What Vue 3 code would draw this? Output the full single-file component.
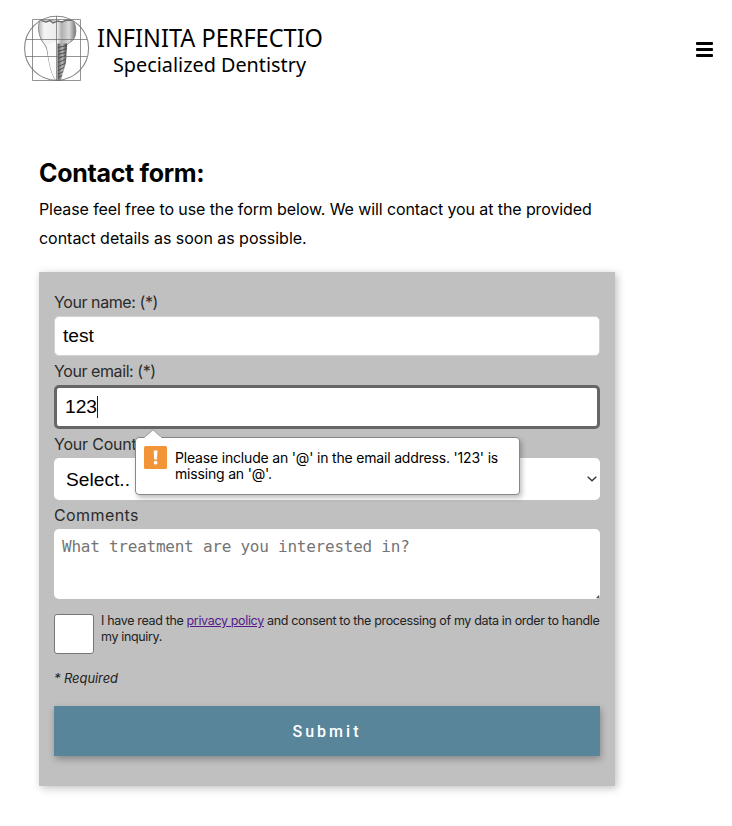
<script setup>
import { ref } from 'vue'

const name = ref('test')
const email = ref('123')
const country = ref('')
const comments = ref('')
const consent = ref(false)
</script>

<template>
  <div class="page">
    <header class="header">
      <svg class="logo" width="304" height="72" viewBox="0 0 304 72" role="img">
        <defs>
          <linearGradient id="crown" x1="0" x2="1" y1="0" y2="0">
            <stop offset="0" stop-color="#b5b5b5" />
            <stop offset=".15" stop-color="#f4f4f4" />
            <stop offset=".5" stop-color="#ececec" />
            <stop offset=".62" stop-color="#b0b0b0" />
            <stop offset=".82" stop-color="#dadada" />
            <stop offset="1" stop-color="#777" />
          </linearGradient>
          <linearGradient id="screw" x1="0" x2="1" y1="0" y2="0">
            <stop offset="0" stop-color="#555" />
            <stop offset=".5" stop-color="#bbb" />
            <stop offset="1" stop-color="#444" />
          </linearGradient>
        </defs>
        <g transform="translate(0 1.500)">
          <path d="M16 6.500C22 9 27 6 33 8C39 9 44 6 49 7C52 11 53 20 50 25C48 29 43 29 42 34L40 48L36 67H32C27 61 25 48 23 36C22 31 17 28 16 23C14 17 14 11 16 6.500Z" fill="url(#crown)" stroke="#777" stroke-width=".8" />
          <path d="M23 31C24 43 26 59 32 67H33.500V27C29 29 26 29 23 31Z" fill="#fafafa" />
          <path d="M33.500 30H43L42 49L37 67H33.500Z" fill="url(#screw)" />
          <path d="M34 34L43 32M34 38L43 35M34 41L42 39M34 45L42 42M34 49L41 46M34 53L41 50M34 57L40 54M34 61L39 58M34 64L38 62" stroke="#444" stroke-width=".9" />
          <path d="M17 7L22 8.500L26 7L29 9.500L34 7.500L38 8.500L42 6.500L48 7" fill="none" stroke="#666" stroke-width="1.200" />
        </g>
        <circle cx="32.600" cy="36.300" r="32" fill="none" stroke="#888" stroke-width="1.100" />
        <path d="M8.500 7.500H56.500V68.500H8.500ZM2 27.500H63M2 44.500H63M32.500 4V68" fill="none" stroke="#666" stroke-width="1" stroke-opacity=".7" />
        <text class="brand" x="73" y="34.500" textLength="226" lengthAdjust="spacingAndGlyphs">INFINITA PERFECTIO</text>
        <text class="tagline" x="89" y="60" textLength="193" lengthAdjust="spacingAndGlyphs">Specialized Dentistry</text>
      </svg>
      <button class="menu" type="button"><i></i><i></i><i></i></button>
    </header>

    <main class="main">
      <h2 class="title">Contact form:</h2>
      <p class="intro"><span class="intro-a">Please feel free to use the form below. We will contact you at the provided</span><br /><span class="intro-b">contact details as soon as possible.</span></p>

      <form class="form" novalidate @submit.prevent>
        <label class="label" for="name">Your name: (*)</label>
        <input id="name" v-model="name" class="field" type="text" />
        <label class="label" for="email">Your email: (*)</label>
        <div class="email">
          <input id="email" v-model="email" class="field focused" type="text" />
          <span class="caret"></span>
          <div class="tip">
            <svg class="tip-arrow" width="18" height="9" viewBox="0 0 18 9"><path d="M0 9L9 .700L18 9" fill="#fff" stroke="#999" /><path d="M1 8.500H17" stroke="#fff" stroke-width="1.500" /></svg>
            <svg class="tip-icon" width="23" height="23" viewBox="0 0 23 23"><rect width="23" height="23" rx="1.500" fill="#f29438" /><path d="M9.700 4.500H13.500L13 13.500H10.200Z" fill="#fff" /><circle cx="11.600" cy="16.700" r="1.900" fill="#fff" /></svg>
            <p class="tip-text">Please include an '@' in the email address. '123' is<br />missing an '@'.</p>
          </div>
        </div>
        <label class="label country" for="country">Your Country</label>
        <div class="select-wrap">
          <select id="country" v-model="country" class="select"><option value="">Select..</option></select>
          <svg class="chevron" width="10" height="6" viewBox="0 0 10 6"><path d="M.700 .700L5 4.800L9.300 .700" fill="none" stroke="#333" stroke-width="1.300" /></svg>
        </div>
        <label class="label comments" for="comments">Comments</label>
        <div class="area-wrap">
          <textarea id="comments" v-model="comments" class="area" placeholder="What treatment are you interested in?"></textarea>
          <svg class="grip" width="3" height="3" viewBox="0 0 3 3"><path d="M0 3L3 0V3Z" fill="#555" /></svg>
        </div>
        <div class="consent">
          <input v-model="consent" class="check" type="checkbox" />
          <p class="terms"><span>I have read the <a href="#">privacy policy</a> and consent to the processing of my data in order to handle</span><br />my inquiry.</p>
        </div>
        <p class="required">* Required</p>
        <button class="submit" type="submit">Submit</button>
      </form>
    </main>
  </div>
</template>

<style>
body { margin: 0; background: #fff; }
</style>

<style scoped>
* { box-sizing: border-box; }
.page { width: 732px; height: 826px; overflow: hidden; color: #000; font-family: Inter, sans-serif; font-size: 16px; }
.header { display: flex; justify-content: space-between; align-items: flex-start; padding: 12px 19px 0 24px; height: 158px; }
.logo { display: block; overflow: visible; }
.brand { font: 26px "Noto Sans", sans-serif; }
.tagline { font: 20px "Noto Sans", sans-serif; }
.menu { display: flex; flex-direction: column; gap: 3px; width: 17px; padding: 0; margin-top: 30px; border: 0; background: none; }
.menu i { width: 17px; height: 3px; border-radius: 1px; background: #000; }
.main { width: 576px; margin-left: 39px; }
.title { margin: 0; height: 37px; font-size: 25px; line-height: 30px; font-weight: 700; letter-spacing: -0.3px; white-space: nowrap; }
.intro { margin: 0; height: 77px; line-height: 29px; white-space: nowrap; }
.intro-a { letter-spacing: -0.1px; }
.intro-b { letter-spacing: -0.03px; }
.form { display: flex; flex-direction: column; height: 514px; padding: 15px; background: #c0c0c0; box-shadow: 2px 2px 8px rgba(0, 0, 0, .25); }
.label { height: 29px; line-height: 30px; color: #2b2b2b; letter-spacing: -0.42px; }
.label.country { letter-spacing: -0.2px; }
.label.comments { letter-spacing: 0.4px; }
.field { display: block; width: 100%; height: 40px; padding: 0 8px; border: 1px solid #d2d2d2; border-radius: 5px; background: #fff; color: #000; font: 19.200px "Liberation Sans", Arial, sans-serif; outline: none; }
.email { position: relative; }
.field.focused { height: 44px; border: 3px solid #666; }
.caret { position: absolute; left: 43px; top: 11px; width: 1px; height: 22px; background: #222; }
.tip { position: absolute; z-index: 2; left: 81px; top: 52px; display: flex; gap: 8px; width: 385px; height: 58px; padding: 8px; border: 1px solid #888; border-radius: 4px; background: #fff; box-shadow: 2px 3px 5px rgba(0, 0, 0, .25); }
.tip-arrow { position: absolute; left: 8px; top: -9px; }
.tip-icon { flex: none; }
.tip-text { margin: 4px 0 0; font-size: 14px; line-height: 16px; letter-spacing: -0.18px; white-space: nowrap; }
.select-wrap { position: relative; height: 42px; }
.select { width: 100%; height: 42px; padding: 0 12px; border: 0; border-radius: 5px; appearance: none; background: #fff; color: #000; font: 19.200px "Liberation Sans", Arial, sans-serif; }
.chevron { position: absolute; right: 3px; top: 18px; }
.area-wrap { position: relative; height: 70px; }
.area { display: block; width: 100%; height: 70px; padding: 8px; border: 0; border-radius: 5px; background: #fff; font: 16px/20px "DejaVu Sans Mono", monospace; letter-spacing: -0.24px; resize: none; }
.area::placeholder { color: #757575; }
.grip { position: absolute; right: 1px; bottom: 1px; }
.consent { display: flex; gap: 7px; margin-top: 15px; height: 56px; }
.check { flex: none; width: 40px; height: 40px; margin: 0; appearance: none; border: 1px solid #777; border-radius: 3px; background: #fff; }
.terms { margin: -1px 0 0; font-size: 12.500px; line-height: 16px; color: #222; letter-spacing: -0.345px; white-space: nowrap; }
.terms a { color: #551a8b; }
.required { margin: 0; height: 36px; font-size: 13px; line-height: 17px; font-style: italic; color: #222; letter-spacing: -0.08px; }
.submit { flex: none; height: 50px; padding: 0; border: 0; background: #58859a; box-shadow: 1px 3px 7px rgba(0, 0, 0, .3); color: #fff; font: 500 16px Roboto, sans-serif; letter-spacing: 3px; }
</style>
